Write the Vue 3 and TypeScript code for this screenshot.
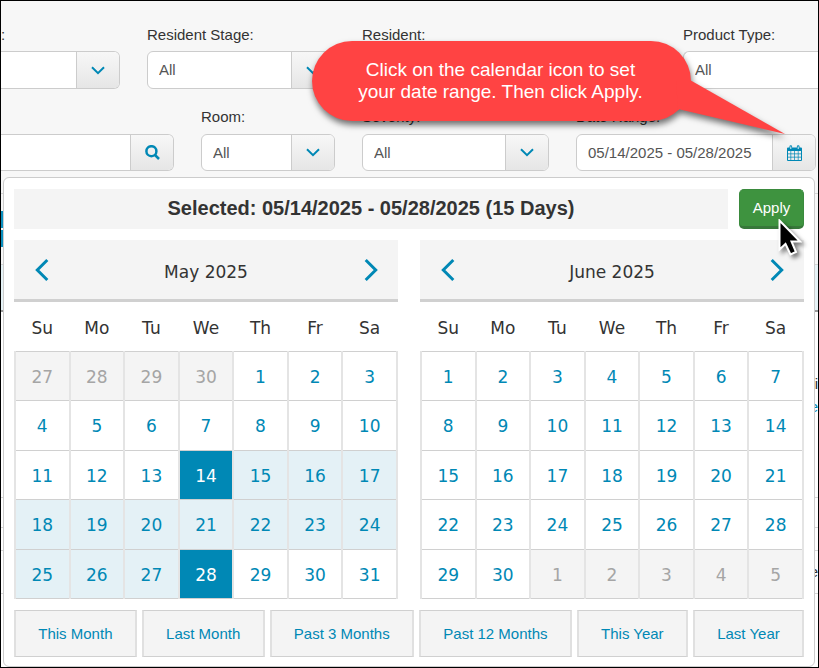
<script setup lang="ts">
import { ref } from 'vue'

interface Day {
  n: number
  kind: '' | 'off' | 'range' | 'edge'
}
interface Month {
  title: string
  weeks: Day[][]
}

const weekdays = ['Su', 'Mo', 'Tu', 'We', 'Th', 'Fr', 'Sa']
const presets = ['This Month', 'Last Month', 'Past 3 Months', 'Past 12 Months', 'This Year', 'Last Year']
const range = ref('05/14/2025 - 05/28/2025')
const search = ref('')

function buildMonth(title: string, before: number[], length: number, after: number[], start = 0, end = 0): Month {
  const days: Day[] = before.map((n) => ({ n, kind: 'off' }))
  for (let n = 1; n <= length; n++) {
    const kind = n === start || n === end ? 'edge' : n > start && n < end ? 'range' : ''
    days.push({ n, kind })
  }
  after.forEach((n) => days.push({ n, kind: 'off' }))
  const weeks: Day[][] = []
  for (let i = 0; i < days.length; i += 7) weeks.push(days.slice(i, i + 7))
  return { title, weeks }
}

const months: Month[] = [
  buildMonth('May 2025', [27, 28, 29, 30], 31, [], 14, 28),
  buildMonth('June 2025', [], 30, [1, 2, 3, 4, 5]),
]
</script>

<template>
  <div class="page">
    <form class="filters" @submit.prevent>
      <div class="row row-top">
        <div class="group">
          <label class="label label-cut" for="f-first">:</label>
          <div class="field open-left">
            <select id="f-first"><option></option></select>
            <span class="addon"><svg width="14" height="9" viewBox="0 0 14 9"><path d="M1 1.2 7 7.2 13 1.2" /></svg></span>
          </div>
        </div>
        <div class="group">
          <label class="label" for="f-stage">Resident Stage:</label>
          <div class="field">
            <select id="f-stage"><option>All</option></select>
            <span class="addon"><svg width="14" height="9" viewBox="0 0 14 9"><path d="M1 1.2 7 7.2 13 1.2" /></svg></span>
          </div>
        </div>
        <div class="group">
          <label class="label" for="f-resident">Resident:</label>
          <div class="field"><input id="f-resident" type="text" /></div>
        </div>
        <div class="group">
          <label class="label" for="f-type">Product Type:</label>
          <div class="field open-right">
            <select id="f-type"><option>All</option></select>
          </div>
        </div>
      </div>

      <div class="row row-bottom">
        <div class="group">
          <div class="label"></div>
          <div class="field open-left">
            <input v-model="search" type="text" aria-label="Search" />
            <button class="addon" type="button" aria-label="Search">
              <svg width="15" height="15" viewBox="0 0 15 15"><circle cx="6.4" cy="6.2" r="5" class="thick" /><path class="thick" d="M10 10 14 14" /></svg>
            </button>
          </div>
        </div>
        <div class="group">
          <label class="label" for="f-room">Room:</label>
          <div class="field">
            <select id="f-room"><option>All</option></select>
            <span class="addon"><svg width="14" height="9" viewBox="0 0 14 9"><path d="M1 1.2 7 7.2 13 1.2" /></svg></span>
          </div>
        </div>
        <div class="group">
          <label class="label" for="f-severity">Severity:</label>
          <div class="field">
            <select id="f-severity"><option>All</option></select>
            <span class="addon"><svg width="14" height="9" viewBox="0 0 14 9"><path d="M1 1.2 7 7.2 13 1.2" /></svg></span>
          </div>
        </div>
        <div class="group">
          <label class="label" for="f-range">Date Range:</label>
          <div class="field">
            <input id="f-range" v-model="range" type="text" />
            <button class="addon" type="button" aria-label="Open calendar">
              <svg width="15" height="16" viewBox="0 0 15 16">
                <path class="fill" fill-rule="evenodd" d="M1 2.5h1.5V1.2Q2.5.2 3.8.2T5.1 1.2V2.5h4.8V1.2Q9.9.2 11.2.2t1.3 1V2.5H14q1 0 1 1V15q0 1-1 1H1q-1 0-1-1V3.500q0-1 1-1zM1 6v2.500h2.500V6zm3.200 0v2.500h3V6zm3.700 0v2.500h2.900V6zm3.600 0v2.500H14V6zM1 9.200v2.600h2.500V9.200zm3.200 0v2.600h3V9.200zm3.700 0v2.600h2.900V9.200zm3.600 0v2.600H14V9.200zM1 12.500V15h2.500v-2.500zm3.200 0V15h3v-2.500zm3.700 0V15h2.900v-2.500zm3.600 0V15H14v-2.500z" />
                <path class="notch" d="M3.800 1.500V4M11.200 1.500V4" />
              </svg>
            </button>
          </div>
        </div>
      </div>
    </form>

    <div class="results">
      <div class="backdrop">
        <div class="strip s1"></div>
        <div class="strip s2"><i></i><i></i></div>
        <div class="strip s3"></div>
        <div class="strip s4"><span>i</span><a href="#">e</a></div>
        <div class="strip s5"></div>
        <div class="strip s6"></div>
        <div class="strip s7"><span>e</span></div>
      </div>

      <section class="picker">
        <div class="summary">
          <div class="selected">Selected: 05/14/2025 - 05/28/2025 (15 Days)</div>
          <button class="apply" type="button">Apply</button>
        </div>
        <div class="months">
          <div v-for="m in months" :key="m.title" class="month">
            <div class="head">
              <button class="nav" type="button" aria-label="Previous month">
                <svg width="14" height="24" viewBox="0 0 14 24"><path d="M12.300 2 2.300 12l10 10" /></svg>
              </button>
              <div class="title">{{ m.title }}</div>
              <button class="nav" type="button" aria-label="Next month">
                <svg width="14" height="24" viewBox="0 0 14 24"><path d="M1.700 2l10 10-10 10" /></svg>
              </button>
            </div>
            <table>
              <thead>
                <tr><th v-for="d in weekdays" :key="d" scope="col">{{ d }}</th></tr>
              </thead>
              <tbody>
                <tr v-for="(w, i) in m.weeks" :key="i">
                  <td v-for="(d, j) in w" :key="j" :class="d.kind"><button type="button">{{ d.n }}</button></td>
                </tr>
              </tbody>
            </table>
          </div>
        </div>
        <div class="presets">
          <button v-for="p in presets" :key="p" type="button">{{ p }}</button>
        </div>
      </section>
    </div>

    <div class="callout">
      <svg class="tail" width="110" height="60" viewBox="0 0 110 60"><path d="M0 0H14L109 54 2 29z" /></svg>
      <p>Click on the calendar icon to set<br />your date range. Then click Apply.</p>
    </div>

    <svg class="cursor" width="24" height="40" viewBox="0 0 24 40">
      <path d="M1.500 1.500V30.500L7.500 25 12.500 35.500 18 33 13.500 22.500H22z" />
    </svg>
  </div>
</template>

<style>
body {
  background: #f7f7f7;
}
</style>

<style scoped>
* {
  box-sizing: border-box;
}
.page {
  position: relative;
  display: flex;
  flex-direction: column;
  min-height: 100vh;
  border: 1px solid #000;
  overflow: hidden;
  background: #f7f7f7;
  color: #333;
  font: 15px/20px "Liberation Sans", Arial, sans-serif;
}
button,
input,
select {
  margin: 0;
  border: 0;
  padding: 0;
  background: none;
  font: inherit;
  color: inherit;
  border-radius: 0;
}
button {
  cursor: pointer;
}
.filters {
  display: flex;
  flex-direction: column;
  gap: 18px;
  padding-top: 24px;
}
.row {
  display: grid;
  column-gap: 27px;
}
.row-top {
  grid-template-columns: 119fr 188fr 294fr 135fr;
}
.row-bottom {
  grid-template-columns: 173fr 134fr 187fr 240fr;
  padding-right: 2px;
}
.group {
  min-width: 0;
}
.label {
  display: block;
  height: 26px;
  white-space: nowrap;
}
.row-bottom .label {
  height: 27px;
}
.field {
  display: flex;
  height: 38px;
  border: 1px solid #ccc;
  border-radius: 6px;
  background: #fff;
  overflow: hidden;
}
.row-bottom .field {
  height: 37px;
}
.open-left {
  border-left: 0;
  border-top-left-radius: 0;
  border-bottom-left-radius: 0;
}
.open-right {
  border-right: 0;
  border-top-right-radius: 0;
  border-bottom-right-radius: 0;
}
.field select,
.field input {
  flex: 1;
  min-width: 0;
  padding: 0 11px;
  appearance: none;
  color: #555;
  outline: none;
}
.addon {
  display: flex;
  flex: none;
  align-items: center;
  justify-content: center;
  width: 43px;
  border-left: 1px solid #ccc;
  background: linear-gradient(#f7f7f7, #e6e6e6);
}
.addon svg {
  fill: none;
  stroke: #0088b5;
  stroke-width: 2;
}
.addon .thick {
  stroke-width: 2.500;
}
.addon .fill {
  fill: #0088b5;
  stroke: none;
}
.addon .notch {
  stroke: #e8f2f5;
  stroke-width: 1;
}
.results {
  position: relative;
  flex: 1;
  display: flex;
  margin-top: 6px;
  padding: 0 3px 0 2px;
}
.backdrop {
  position: absolute;
  inset: 0;
  display: flex;
  flex-direction: column;
  background: #fff;
  overflow: hidden;
}
.strip {
  display: flex;
  flex-direction: column;
  align-items: flex-end;
  border-bottom: 1px solid #d5d5d5;
}
.strip i {
  align-self: flex-start;
  width: 4px;
  height: 17px;
  margin-bottom: 2px;
  background: #0a8fbe;
}
.s1 { height: 17px; background: #f7f7f7; }
.s2 { height: 71px; padding-top: 17px; background: #f7f7f7; }
.s3 { height: 47px; background: #e6f3f7; border-bottom: 2px solid #999; }
.s4 { height: 186px; padding-top: 62px; gap: 3px; }
.s5 { height: 30px; }
.s6 { height: 23px; }
.s7 { height: 43px; padding-top: 11px; }
.strip a {
  color: #0088b5;
  text-decoration: none;
}
.picker {
  position: relative;
  flex: 1;
  min-width: 0;
  display: flex;
  flex-direction: column;
  gap: 11px;
  padding: 11px 10px 8px;
  border: 1px solid #ccc;
  border-radius: 6px;
  background: #fff;
}
.summary {
  display: flex;
  gap: 11px;
}
.selected {
  flex: 1;
  background: #f4f4f4;
  font-size: 20px;
  font-weight: bold;
  line-height: 38px;
  text-align: center;
}
.apply {
  width: 65px;
  height: 40px;
  border: 1px solid #3a8a3d;
  border-bottom: 3px solid #37783a;
  border-radius: 5px;
  background: #3e933f;
  color: #fff;
}
.months {
  display: grid;
  grid-template-columns: 1fr 1fr;
  gap: 22px;
  font-family: "DejaVu Sans", Verdana, sans-serif;
  font-size: 17px;
}
.head {
  display: flex;
  height: 62px;
  border-bottom: 3px solid #d0d0d0;
  background: #f4f4f4;
}
.nav {
  display: flex;
  align-items: center;
  justify-content: center;
  width: 55px;
}
.nav svg {
  fill: none;
  stroke: #0088b5;
  stroke-width: 3;
}
.title {
  flex: 1;
  padding-top: 3px;
  line-height: 59px;
  text-align: center;
}
table {
  width: 100%;
  height: 297px;
  table-layout: fixed;
  border-collapse: collapse;
}
th {
  height: 49px;
  padding: 3px 0 0;
  font-weight: normal;
}
td {
  padding: 0;
  border: 1px solid #d0d0d0;
  border-left: 2px solid #e4e4e4;
  border-right: 2px solid #e4e4e4;
  color: #0088b5;
  text-align: center;
}
td button {
  width: 100%;
  height: 48px;
  padding-top: 2px;
}
.off {
  background: #f4f4f4;
  color: #a5a5a5;
}
.range {
  background: #e4f1f6;
}
.edge {
  background: #0088b5;
  color: #fff;
}
.presets {
  display: flex;
  gap: 5px;
}
.presets button {
  flex: 1 1 auto;
  height: 47px;
  padding: 0 20px;
  border: 1px solid #d0d0d0;
  border-left: 2px solid #e0e0e0;
  border-right: 2px solid #e0e0e0;
  background: #f4f4f4;
  color: #0088b5;
  white-space: nowrap;
}
.callout {
  position: absolute;
  top: 40px;
  right: 127px;
  width: 379px;
  height: 80px;
  border-radius: 40px;
  background: #ff4343;
  color: #fff;
  font-size: 19px;
  line-height: 22px;
  text-align: center;
  filter: drop-shadow(1px 4px 3px rgba(0, 0, 0, 0.55));
}
.callout p {
  margin: 0;
  padding: 18px 2px 0 0;
  white-space: nowrap;
}
.tail {
  position: absolute;
  left: 364px;
  top: 39px;
  fill: #ff4343;
}
.cursor {
  position: absolute;
  right: 16px;
  top: 218px;
  fill: #000;
  stroke: #fff;
  stroke-width: 2;
  filter: drop-shadow(3px 3px 2px rgba(0, 0, 0, 0.5));
  pointer-events: none;
}
</style>
